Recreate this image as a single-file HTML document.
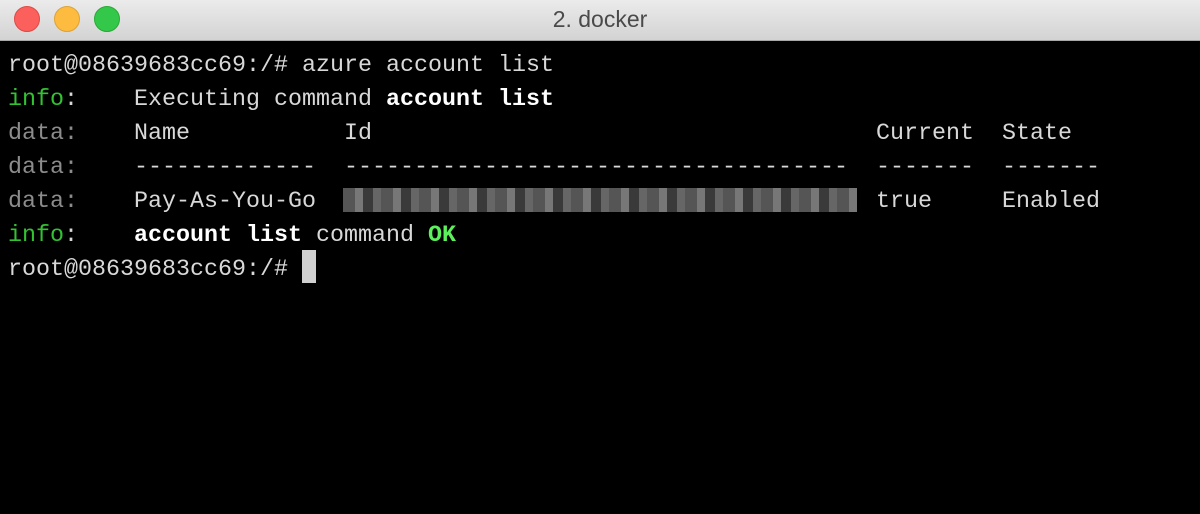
<!DOCTYPE html>
<html><head><style>
body{margin:0;width:1200px;height:514px;background:#000;overflow:hidden;font-family:"Liberation Mono",monospace}
.bar{position:absolute;left:0;top:0;width:1200px;height:40px;background:linear-gradient(#ebebeb,#d3d3d3);border-bottom:1px solid #a8a8a8}
.dot{position:absolute;top:6px;width:24px;height:24px;border-radius:50%}
.title{position:absolute;top:0;width:1200px;text-align:center;line-height:38px;font-family:"Liberation Sans",sans-serif;font-size:23px;color:#4a4a4a}
pre{position:absolute;left:8px;top:49px;margin:0;font-family:"Liberation Mono",monospace;font-size:23.33px;line-height:34px;color:#d8d8d8}
.g{color:#32c232}.d{color:#8c8c8c}.b{color:#fff;font-weight:bold}.ok{color:#5cf05c;font-weight:bold}
.blur{position:absolute;left:343px;top:188px;width:514px;height:24px;background:repeating-linear-gradient(90deg,#555 0 12px,#777 12px 20px,#3a3a3a 20px 30px,#666 30px 38px)}
.cur{position:absolute;left:302px;top:250px;width:14px;height:33px;background:#d0d0d0}
</style></head><body>
<div class="bar"></div>
<div class="dot" style="left:14px;background:#fc605c;border:1px solid #de4a45;"></div>
<div class="dot" style="left:54px;background:#fdbc40;border:1px solid #dea236;"></div>
<div class="dot" style="left:94px;background:#34c84a;border:1px solid #27aa35;"></div>
<div class="title">2. docker</div>
<pre>root@08639683cc69:/# azure account list
<span class="g">info</span>:    Executing command <span class="b">account list</span>
<span class="d">data:</span>    Name           Id                                    Current  State
<span class="d">data:</span>    -------------  ------------------------------------  -------  -------
<span class="d">data:</span>    Pay-As-You-Go                                        true     Enabled
<span class="g">info</span>:    <span class="b">account list</span> command <span class="ok">OK</span>
root@08639683cc69:/# </pre>
<div class="blur"></div>
<div class="cur"></div>
</body></html>
